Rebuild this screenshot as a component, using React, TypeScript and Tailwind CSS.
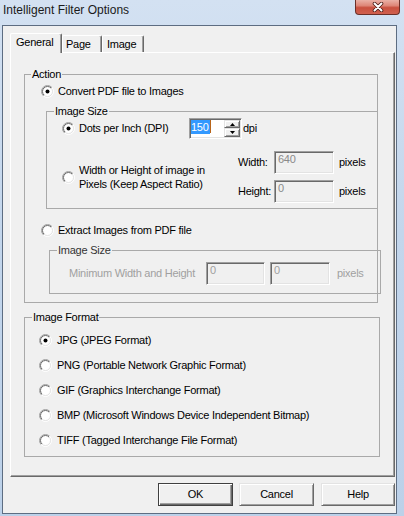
import React from 'react';

const Radio: React.FC<{ checked?: boolean }> = ({ checked }) => (
  <svg width="13" height="13" viewBox="0 0 13 13" className="flex-none">
    <defs>
      <linearGradient id="radioOuter" x1="0" y1="0" x2="1" y2="1">
        <stop offset="0.5" stopColor="#a0a0a0" />
        <stop offset="0.5" stopColor="#ffffff" />
      </linearGradient>
      <linearGradient id="radioInner" x1="0" y1="0" x2="1" y2="1">
        <stop offset="0.5" stopColor="#696969" />
        <stop offset="0.5" stopColor="#e3e3e3" />
      </linearGradient>
    </defs>
    <circle cx="6.5" cy="6.5" r="6" fill="none" stroke="url(#radioOuter)" />
    <circle cx="6.5" cy="6.5" r="5" fill="#ffffff" stroke="url(#radioInner)" />
    {checked && <circle cx="6.5" cy="6.5" r="2" fill="#000000" />}
  </svg>
);

const sunken =
  'border border-t-[#a0a0a0] border-l-[#a0a0a0] border-b-white border-r-white shadow-[inset_1px_1px_0_#696969,inset_-1px_-1px_0_#e3e3e3] p-[1px]';

const raised =
  'border border-t-[#e3e3e3] border-l-[#e3e3e3] border-b-[#696969] border-r-[#696969] shadow-[inset_1px_1px_0_#ffffff,inset_-1px_-1px_0_#a0a0a0]';

const groupBorder = 'border border-[#a9a9a9]';

const Arrow: React.FC<{ up?: boolean }> = ({ up }) => (
  <svg width="5" height="3" viewBox="0 0 5 3">
    <path d={up ? 'M0 3 L2.5 0 L5 3 Z' : 'M0 0 L2.5 3 L5 0 Z'} fill="#000" />
  </svg>
);

const App: React.FC = () => {
  return (
    <div className="w-[404px] h-[516px] flex flex-col overflow-hidden bg-[linear-gradient(180deg,#d3e1f2_0%,#c3d6ec_45%,#bcd1e9_100%)] font-['Liberation_Sans',Arial,sans-serif] text-[11px] leading-[13px] tracking-[-0.25px] text-black">
      {/* Title bar */}
      <div className="h-[25px] flex-none flex items-start">
        <div className="pl-[3px] pt-[3px] text-[12px] leading-[14px] tracking-normal text-[#1a1a1a]">
          Intelligent Filter Options
        </div>
        <div className="ml-auto mr-[4px] w-[45px] h-[15px] flex items-center justify-center rounded-b-[4px] border border-t-0 border-[#6b2f28] bg-[linear-gradient(180deg,#eab0a6_0%,#de8678_40%,#c9503f_55%,#d0604f_100%)]">
          <svg width="12" height="10" viewBox="0 0 12 10">
            <path d="M2.5 1.5 L9.5 8.5 M9.5 1.5 L2.5 8.5" stroke="#4a1b16" strokeWidth="3.6" strokeLinecap="round" />
            <path d="M2.5 1.5 L9.5 8.5 M9.5 1.5 L2.5 8.5" stroke="#ffffff" strokeWidth="2" strokeLinecap="round" />
          </svg>
        </div>
      </div>

      {/* Client area */}
      <div className="flex-1 ml-[2px] mr-[7px] mb-[2px] border border-[#5d6d82] bg-[#f0f0f0] flex flex-col pl-[7px] pr-[1px] pt-[7px]">
        {/* Tabs */}
        <div className="h-[19px] flex items-end">
          <div className="relative z-10 mb-[-1px] h-[20px] w-[52px] pl-[5px] pt-[2px] bg-[#f0f0f0] rounded-t-[2px] border-l border-t border-l-white border-t-white border-r border-r-[#696969] shadow-[inset_-1px_0_0_#a0a0a0]">
            General
          </div>
          <div className="h-[17px] w-[40px] pl-[3px] pt-[2px] rounded-t-[2px] border-l border-t border-l-white border-t-white border-r border-r-[#696969] shadow-[inset_-1px_0_0_#a0a0a0]">
            Page
          </div>
          <div className="h-[17px] w-[42px] pl-[4px] pt-[2px] rounded-t-[2px] border-l border-t border-l-white border-t-white border-r border-r-[#696969] shadow-[inset_-1px_0_0_#a0a0a0]">
            Image
          </div>
        </div>

        {/* Tab panel */}
        <div className="h-[425px] border border-t-white border-l-white border-b-[#696969] border-r-[#696969] shadow-[inset_-1px_-1px_0_#a0a0a0] flex flex-col">
          {/* Action */}
          <fieldset className={`mt-[15px] ml-[13px] w-[354px] ${groupBorder}`}>
            <legend className="ml-[6px] px-[1px] leading-[13px]">Action</legend>
            <div className="pt-[4px] pb-[8px]">
              <div className="h-[13px] flex items-center pl-[16px]">
                <Radio checked />
                <span className="ml-[4px]">Convert PDF file to Images</span>
              </div>

              {/* Image Size (enabled) */}
              <fieldset className={`mt-[7px] ml-[21px] mr-[-1px] pb-[5px] ${groupBorder}`}>
                <legend className="ml-[7px] px-[1px] leading-[13px]">Image Size</legend>
                <div className="h-[21px] flex items-center pl-[15px]">
                  <div className="w-[127px] flex items-center">
                    <Radio checked />
                    <span className="ml-[4px]">Dots per Inch (DPI)</span>
                  </div>
                  <div className={`w-[53px] h-[21px] bg-white flex ${sunken}`}>
                    <div className="flex-1 flex items-start">
                      <span className="bg-[#3399ff] text-white leading-[14px] pr-[1px]">150</span>
                      <span className="w-[1px] h-[13px] bg-[#b8651a]" />
                    </div>
                    <div className="w-[16px] flex flex-col">
                      <div className={`h-[8px] flex items-center justify-center bg-[#f0f0f0] ${raised}`}>
                        <Arrow up />
                      </div>
                      <div className={`h-[9px] flex items-center justify-center bg-[#f0f0f0] ${raised}`}>
                        <Arrow />
                      </div>
                    </div>
                  </div>
                  <span className="ml-[1px]">dpi</span>
                </div>

                <div className="mt-[12px] flex items-center pl-[15px]">
                  <div className="w-[176px] flex items-center">
                    <Radio />
                    <span className="ml-[4px] leading-[14px] whitespace-nowrap">
                      Width or Height of image in
                      <br />
                      Pixels (Keep Aspect Ratio)
                    </span>
                  </div>
                  <div className="flex flex-col gap-[6px]">
                    <div className="h-[23px] flex items-center">
                      <span className="w-[36px]">Width:</span>
                      <div className={`w-[60px] h-[23px] pl-[3px] text-[#8a8a8a] ${sunken}`}>640</div>
                      <span className="ml-[5px]">pixels</span>
                    </div>
                    <div className="h-[23px] flex items-center">
                      <span className="w-[36px]">Height:</span>
                      <div className={`w-[60px] h-[23px] pl-[3px] text-[#8a8a8a] ${sunken}`}>0</div>
                      <span className="ml-[5px]">pixels</span>
                    </div>
                  </div>
                </div>
              </fieldset>

              <div className="mt-[15px] h-[13px] flex items-center pl-[16px]">
                <Radio />
                <span className="ml-[4px]">Extract Images from PDF file</span>
              </div>

              {/* Image Size (disabled) */}
              <fieldset className={`mt-[7px] ml-[24px] mr-[-4px] pb-[8px] ${groupBorder}`}>
                <legend className="ml-[7px] px-[1px] leading-[13px] text-[#333333]">Image Size</legend>
                <div className="pt-[5px] h-[28px] flex items-end">
                  <div className="h-[23px] flex items-center pl-[19px] text-[#a0a0a0]">
                    <span className="w-[137px] whitespace-nowrap">Minimum Width and Height</span>
                    <div className={`w-[59px] h-[23px] pl-[3px] ${sunken}`}>0</div>
                    <div className={`ml-[5px] w-[60px] h-[23px] pl-[3px] ${sunken}`}>0</div>
                    <span className="ml-[7px]">pixels</span>
                  </div>
                </div>
              </fieldset>
            </div>
          </fieldset>

          {/* Image Format */}
          <fieldset className={`mt-[8px] ml-[13px] w-[356px] ${groupBorder}`}>
            <legend className="ml-[7px] px-[1px] leading-[13px]">Image Format</legend>
            <div className="pt-[4px] pb-[3px]">
              {[
                'JPG (JPEG Format)',
                'PNG (Portable Network Graphic Format)',
                'GIF (Graphics Interchange Format)',
                'BMP (Microsoft Windows Device Independent Bitmap)',
                'TIFF (Tagged Interchange File Format)',
              ].map((label, i) => (
                <div key={label} className="h-[25px] flex items-center pl-[14px]">
                  <Radio checked={i === 0} />
                  <span className="ml-[5px]">{label}</span>
                </div>
              ))}
            </div>
          </fieldset>
        </div>

        {/* Buttons */}
        <div className="mt-[6px] flex justify-end">
          <button className="w-[75px] h-[23px] bg-[#f0f0f0] border border-[#404040] shadow-[inset_1px_1px_0_#ffffff,inset_-1px_-1px_0_#696969,inset_-2px_-2px_0_#a0a0a0]">
            OK
          </button>
          <button className={`ml-[6px] w-[75px] h-[23px] bg-[#f0f0f0] ${raised}`}>Cancel</button>
          <button className={`ml-[7px] w-[74px] h-[23px] bg-[#f0f0f0] ${raised}`}>Help</button>
        </div>
      </div>
    </div>
  );
};

export default App;
